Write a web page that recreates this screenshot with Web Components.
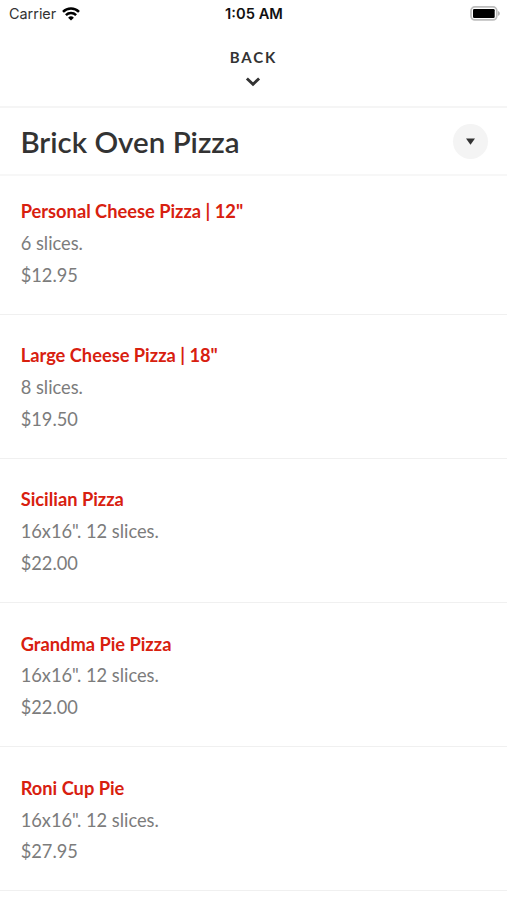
<!DOCTYPE html>
<html lang="en">
<head>
<meta charset="utf-8">
<title>Brick Oven Pizza</title>
<style>
  body {
    margin: 0;
    background: #fff;
    overflow: hidden;
  }
</style>
</head>
<body>
<pizza-menu></pizza-menu>

<script>
function makeTemplate(html) {
  const template = document.createElement("template");
  template.innerHTML = html;
  return template;
}

const statusTemplate = makeTemplate(/*html*/`
  <style>
    :host {
      display: grid;
      grid-template-columns: 1fr auto 1fr;
      align-items: center;
      height: 27px;
      padding: 0 7px 0 9px;
      box-sizing: border-box;
      font: 14.4px/27px Inter, sans-serif;
      color: #111;
    }
    .carrier {
      display: flex;
      align-items: center;
      gap: 6px;
      color: #333;
    }
    .time {
      margin-right: 1px;
      padding-top: 2px;
      font-weight: 600;
      font-size: 14.7px;
      line-height: 25px;
    }
    .battery {
      justify-self: end;
    }
    svg {
      display: block;
    }
  </style>
  <div class="carrier">
    <span>Carrier</span>
    <svg width="18" height="14" viewBox="0 0 18 14">
      <g fill="none" stroke="#000" stroke-width="2.5">
        <path d="M1 4.8a11.4 11.4 0 0 1 16 0"/>
        <path d="M3.9 8.2a7.3 7.3 0 0 1 10.2 0"/>
      </g>
      <path d="M9 13.6L6.1 10.7a4.2 4.2 0 0 1 5.8 0z"/>
    </svg>
  </div>
  <span class="time">1:05 AM</span>
  <svg class="battery" width="30" height="15" viewBox="0 0 30 15">
    <rect x="1" y=".9" width="25.8" height="13" rx="3.8" fill="none" stroke="#bdbdbd" stroke-width="1.7"/>
    <rect x="3" y="3" width="21.7" height="8.9" rx="1.2"/>
    <path d="M28.1 5.1c2.2.8 2.2 3.9 0 4.7z" fill="#aaa"/>
  </svg>`);

class StatusBar extends HTMLElement {
  constructor() {
    super();
    this.attachShadow({ mode: "open" });
    this.shadowRoot.appendChild(statusTemplate.content.cloneNode(true));
  }
}

const backTemplate = makeTemplate(/*html*/`
  <style>
    :host {
      display: flex;
      flex-direction: column;
      align-items: center;
      height: 81px;
      padding: 20px 1px 0 0;
      box-sizing: border-box;
      border-bottom: 2px solid #f5f5f5;
      color: #333;
    }
    span {
      margin-left: 1px;
      font-size: 15px;
      font-weight: 700;
      line-height: 20px;
      letter-spacing: 1.9px;
    }
    svg {
      display: block;
      margin-top: 9px;
    }
  </style>
  <span><slot></slot></span>
  <svg width="16" height="12" viewBox="0 0 16 12">
    <path d="M1.9 2.5L8 8.2l6.1-5.7" fill="none" stroke="#333" stroke-width="2.9"/>
  </svg>`);

class BackBar extends HTMLElement {
  constructor() {
    super();
    this.attachShadow({ mode: "open" });
    this.shadowRoot.appendChild(backTemplate.content.cloneNode(true));
  }
}

const headingTemplate = makeTemplate(/*html*/`
  <style>
    :host {
      display: flex;
      align-items: center;
      justify-content: space-between;
      height: 68px;
      padding: 0 19px 0 20.4px;
      box-sizing: border-box;
      border-bottom: 2px solid #f7f7f7;
    }
    h1 {
      margin: 2px 0 0;
      font-size: 29.5px;
      font-weight: 600;
      line-height: 36px;
      color: #333;
    }
    button {
      display: flex;
      align-items: center;
      justify-content: center;
      width: 35px;
      height: 35px;
      padding: 0;
      border: none;
      border-radius: 50%;
      background: #f4f4f4;
    }
  </style>
  <h1><slot></slot></h1>
  <button aria-label="Sections">
    <svg width="9" height="7" viewBox="0 0 9 7"><path d="M0 .5h9L4.5 6.7z" fill="#333"/></svg>
  </button>`);

class MenuHeading extends HTMLElement {
  constructor() {
    super();
    this.attachShadow({ mode: "open" });
    this.shadowRoot.appendChild(headingTemplate.content.cloneNode(true));
  }
}

const itemTemplate = makeTemplate(/*html*/`
  <style>
    :host {
      display: block;
      height: 144.2px;
      padding: 25.6px 20.7px 0;
      box-sizing: border-box;
      border-bottom: 1px solid #f0f0f0;
      font-size: 18.25px;
      line-height: 31.75px;
      color: #7c7c7c;
    }
    h2 {
      margin: 0;
      font-size: 18.25px;
      font-weight: 700;
      color: #d8200f;
    }
    p {
      margin: 0;
    }
  </style>
  <h2><slot name="name"></slot></h2>
  <p><slot name="info"></slot></p>
  <p><slot name="price"></slot></p>`);

class MenuItem extends HTMLElement {
  constructor() {
    super();
    this.attachShadow({ mode: "open" });
    this.shadowRoot.appendChild(itemTemplate.content.cloneNode(true));
  }
}

const menuTemplate = makeTemplate(/*html*/`
  <style>
    :host {
      display: block;
      height: 900px;
      overflow: hidden;
      font-family: Lato, sans-serif;
    }
    menu-item:first-of-type {
      height: 138.7px;
      padding-top: 20.4px;
    }
  </style>
  <status-bar></status-bar>
  <back-bar>BACK</back-bar>
  <menu-heading>Brick Oven Pizza</menu-heading>
  <menu-item>
    <span slot="name">Personal Cheese Pizza | 12"</span>
    <span slot="info">6 slices.</span>
    <span slot="price">$12.95</span>
  </menu-item>
  <menu-item>
    <span slot="name">Large Cheese Pizza | 18"</span>
    <span slot="info">8 slices.</span>
    <span slot="price">$19.50</span>
  </menu-item>
  <menu-item>
    <span slot="name">Sicilian Pizza</span>
    <span slot="info">16x16". 12 slices.</span>
    <span slot="price">$22.00</span>
  </menu-item>
  <menu-item>
    <span slot="name">Grandma Pie Pizza</span>
    <span slot="info">16x16". 12 slices.</span>
    <span slot="price">$22.00</span>
  </menu-item>
  <menu-item>
    <span slot="name">Roni Cup Pie</span>
    <span slot="info">16x16". 12 slices.</span>
    <span slot="price">$27.95</span>
  </menu-item>`);

class PizzaMenu extends HTMLElement {
  constructor() {
    super();
    this.attachShadow({ mode: "open" });
    this.shadowRoot.appendChild(menuTemplate.content.cloneNode(true));
  }
}

customElements.define("status-bar", StatusBar);
customElements.define("back-bar", BackBar);
customElements.define("menu-heading", MenuHeading);
customElements.define("menu-item", MenuItem);
customElements.define("pizza-menu", PizzaMenu);
</script>
</body>
</html>
